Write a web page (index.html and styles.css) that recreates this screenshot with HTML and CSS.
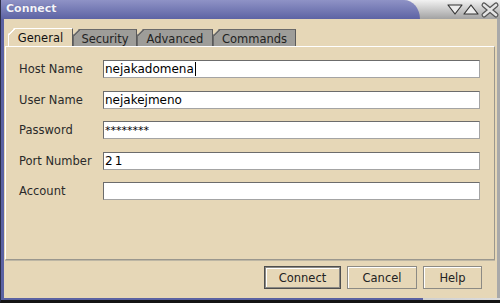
FILE: index.html
```html
<!DOCTYPE html>
<html lang="en">
<head>
    <meta charset="UTF-8">
    <title>Connect</title>
    <link rel="stylesheet" href="styles.css">
</head>
<body>
    <div class="window">
        <div class="titlebar">
            <div class="title-blue">Connect</div>
            <div class="title-rest">
                <svg class="wm-buttons" width="54" height="19" viewBox="0 0 54 19">
                    <polygon points="2,5 16,5 9,14" fill="#ececec" stroke="#333" stroke-width="1.2" stroke-linejoin="round"/>
                    <polygon points="18,14 32,14 25,5" fill="#ececec" stroke="#333" stroke-width="1.2" stroke-linejoin="round"/>
                    <path d="M38,5 L50,15 M50,5 L38,15" stroke="#555" stroke-width="5" stroke-linecap="round"/>
                    <path d="M38,5 L50,15 M50,5 L38,15" stroke="#e4e4e4" stroke-width="2.6" stroke-linecap="round"/>
                </svg>
            </div>
        </div>

        <div class="frame">
            <div class="tabs">
                <div class="tab selected tab-general">General</div>
                <div class="tab tab-security">Security</div>
                <div class="tab tab-advanced">Advanced</div>
                <div class="tab tab-commands">Commands</div>
            </div>

            <div class="panel">
                <div class="form">
                    <label>Host Name</label>
                    <div class="field">nejakadomena<span class="caret"></span></div>
                    <label>User Name</label>
                    <div class="field">nejakejmeno</div>
                    <label>Password</label>
                    <div class="field password">********</div>
                    <label>Port Number</label>
                    <div class="field port">21</div>
                    <label>Account</label>
                    <div class="field"></div>
                </div>
            </div>

            <div class="actions">
                <button class="btn btn-default">Connect</button>
                <button class="btn btn-cancel">Cancel</button>
                <button class="btn btn-help">Help</button>
            </div>
        </div>

        <div class="bottombar">
            <div class="bottom-blue"></div>
            <div class="bottom-rest"></div>
        </div>
    </div>
</body>
</html>
```

FILE: styles.css
```css
body {
    margin: 0;
    width: 500px;
    height: 303px;
    overflow: hidden;
    font-family: "DejaVu Sans", sans-serif;
    font-size: 11.5px;
    background-color: #111;
}
.window {
    width: 499px;
    height: 300px;
    border-left: 1px solid #2c2e48;
    display: flex;
    flex-direction: column;
    border-bottom: 3px solid #141414;
}
.titlebar {
    height: 19px;
    display: flex;
    background: linear-gradient(#f2f2f2, #a2a2a2);
}
.title-blue {
    width: 419px;
    background: linear-gradient(#8f93c6, #5d63a4);
    border-top-right-radius: 16px 19px;
    color: #f4f4fa;
    font-weight: bold;
    font-size: 11px;
    line-height: 18px;
    padding-left: 5px;
    box-sizing: border-box;
    text-shadow: 0 0 1px #4a4f88;
}
.title-rest {
    flex: 1;
    display: flex;
    justify-content: flex-end;
}
.frame {
    flex: 1;
    display: flex;
    flex-direction: column;
    background-color: #e6d7b7;
    border-left: 3px solid #5b62a2;
    border-right: 3px solid #a9a9a9;
}
.tabs {
    display: flex;
    align-items: flex-end;
    padding: 9px 0 0 4px;
    height: 18px;
}
.tab {
    height: 17px;
    box-sizing: border-box;
    display: flex;
    align-items: center;
    justify-content: center;
    color: #222;
    background-color: #9e9d99;
    border-top: 1px solid #6a6a6a;
    border-left: 1px solid #6a6a6a;
    border-right: 1px solid #5a5a5a;
    background-image: linear-gradient(135deg, transparent 4.6px, #6a6a6a 4.6px, #6a6a6a 6px, transparent 6px);
    background-size: 10px 10px;
    background-repeat: no-repeat;
    background-origin: border-box;
    clip-path: polygon(0 6px, 6px 0, 100% 0, 100% 100%, 0 100%);
    padding-top: 1px;
}
.tab.selected {
    height: 18px;
    background-color: #e6d7b7;
    border-top-color: #fff;
    border-left-color: #fff;
    background-image: linear-gradient(135deg, transparent 4.6px, #fff 4.6px, #fff 6px, transparent 6px);
    color: #111;
}
.tab-general { width: 65px; }
.tab-security { width: 64px; }
.tab-advanced { width: 76px; }
.tab-commands { width: 83px; }
.panel {
    margin: 0 2px 0 1px;
    height: 214px;
    box-sizing: border-box;
    border-top: 1px solid #fff;
    border-left: 1px solid #fff;
    border-right: 1px solid #9a978e;
    border-bottom: 1px solid #9a978e;
    box-shadow: 0 1px 0 #bdb6a4;
    padding: 13px 14px 0 13px;
}
.form {
    display: grid;
    grid-template-columns: 84px 1fr;
    grid-auto-rows: 18px;
    row-gap: 12.5px;
    align-items: center;
}
.form label {
    color: #2a2a2a;
}
.field {
    height: 18px;
    box-sizing: border-box;
    background-color: #fff;
    border: 1px solid;
    border-color: #6c6c6c #a4a4a4 #a4a4a4 #6c6c6c;
    padding-left: 1px;
    font-size: 12px;
    line-height: 16px;
    color: #000;
    display: flex;
    align-items: center;
}
.field.password {
    font-size: 11px;
    padding-top: 2px;
}
.field.port {
    letter-spacing: 2px;
}
.caret {
    display: inline-block;
    width: 1px;
    height: 14px;
    background-color: #000;
    margin-left: 1px;
}
.actions {
    display: flex;
    justify-content: flex-end;
    gap: 6px;
    padding: 6px 15px 0 0;
}
.btn {
    height: 23px;
    font-family: "DejaVu Sans", sans-serif;
    font-size: 11.5px;
    color: #222;
    background-color: #e6d7b7;
    border: 1px solid #8c8a84;
    box-shadow: inset 1px 1px 0 #fff;
    padding: 0;
}
.btn-default {
    border-color: #4e4e4e;
    box-shadow: inset 0 0 0 1px #8c8a84, inset 2px 2px 0 #fff;
}
.btn-default { width: 77px; }
.btn-cancel { width: 70px; }
.btn-help { width: 59px; }
.bottombar {
    height: 2px;
    display: flex;
    background: linear-gradient(90deg, #8a8a8a, #dcdcdc);
}
.bottom-blue {
    width: 422px;
    background-color: #5b62a2;
}
.bottom-rest {
    flex: 1;
}
```
